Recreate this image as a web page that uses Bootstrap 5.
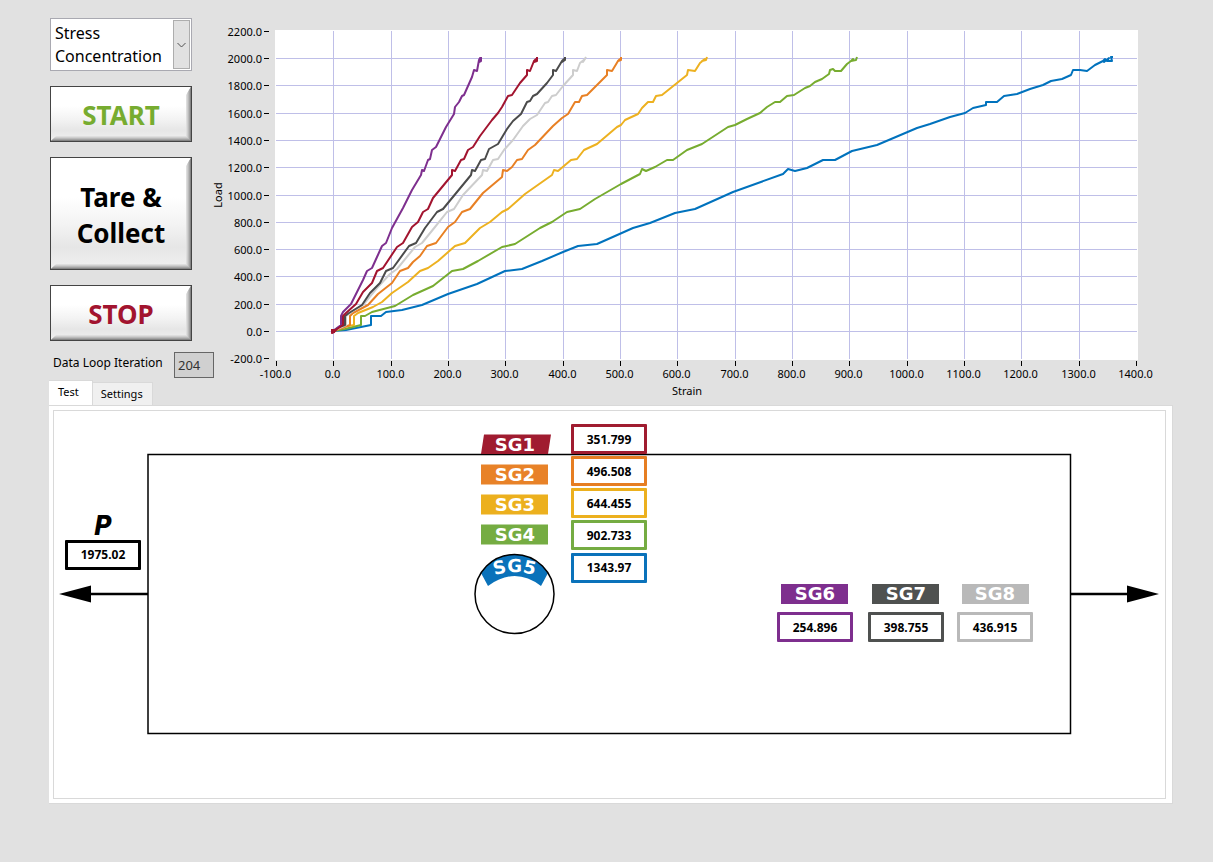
<!DOCTYPE html>
<html lang="en">
<head>
<meta charset="utf-8">
<meta name="viewport" content="width=device-width, initial-scale=1">
<title>Stress Concentration</title>
<link href="https://cdn.jsdelivr.net/npm/bootstrap@5.3.0/dist/css/bootstrap.min.css" rel="stylesheet">
<style>
  body { background: #e1e1e1; color: #000; font-family: "Noto Sans", "Open Sans", sans-serif; font-size: 12px; line-height: 16px; }
  .bench { padding: 18px 40px 58px 49px; }
  .controls { width: 165px; }
  .control-stack { width: 143px; padding-left: 1px; gap: 15px; }
  .mode-box { height: 53px; }
  .mode-box select { height: 53px; border: 1px solid #a9a9b1; background: #fff; color: #000; font-size: 16px; line-height: 23px; padding: 2px 20px 2px 4px; white-space: normal; appearance: none; border-radius: 0; }
  .mode-arrow { top: 2px; right: 2px; bottom: 2px; width: 17px; background: #e1e1e1; border: 1px solid #adadad; pointer-events: none; }
  .bevel { --bs-btn-border-radius: 0; position: relative; height: 56px; padding: 2px 0 0; border: 1px solid #444; color: #000; font-size: 26px; font-weight: 700; line-height: 36px; background: linear-gradient(#fff 0 35%, #f3f3f3 60%, #e6e6e6 80%, #f0f0f0 100%); }
  .bevel:hover { color: #000; border-color: #222; }
  .bevel::after { content: ""; position: absolute; inset: 0; pointer-events: none;
    box-shadow: inset -1px -1px #858585, inset -2px -2px #a3a3a3, inset -3px -3px #bababa, inset -4px -4px #cecece, inset -5px -5px #dedede;
    clip-path: polygon(100% 0, 100% 100%, 0 100%, 6px calc(100% - 6px), calc(100% - 6px) calc(100% - 6px), calc(100% - 5px) 8px); }
  .bevel-tall { height: 113px; }
  .go, .go:hover { color: #77ac30; }
  .halt, .halt:hover { color: #a2142f; }
  .loop-row { padding: 11px 0 0 4px; }
  .loop-row label { line-height: 22px; }
  .loop-row input { width: 40px; height: 26px; border: 1px solid #666; background: #d0d0d0; color: #333; padding: 0 3px; font-size: 13px; }
  .page-tabs { --bs-nav-tabs-border-width: 0; border: 0; }
  .page-tabs .nav-link { border: 1px solid #d9d9d9; border-width: 1px 1px 0 0; border-radius: 0; margin: 0; height: 23px; padding: 0 9px 0 8px; background: #f0f0f0; color: #000; font-size: 11px; }
  .page-tabs .nav-link.active { height: 25px; padding: 0 13px 2px 9px; background: #fff; color: #000; border-color: #d9d9d9; }
  .page-panel { background: #fff; border: 1px solid #d9d9d9; border-width: 1px 1px 1px 0; padding: 4px 6px 4px 4px; }
  .specimen { border: 1px solid #d9d9d9; }
  svg { overflow: visible; }
  svg text { font-size: 11px; }
  .grid-line { stroke: #bfbfe8; }
  .tick { stroke: #000; }
  .trace { fill: none; stroke-width: 2; stroke-linejoin: round; }
  svg text.gauge { font: 700 18px "DejaVu Sans", sans-serif; fill: #fff; text-anchor: middle; }
  svg text.load-sign { font: italic 700 27px "Liberation Sans Narrow", "DejaVu Sans Condensed", sans-serif; fill: #000; text-anchor: middle; }
  .reading { left: calc(var(--x) / 1111 * 100%); top: calc(var(--y) / 387 * 100%); width: 76px; height: 30px; border: 3px solid var(--ink); border-radius: 1px; background: #fff; color: #000; padding: 0; text-align: center; font-size: 12px; font-weight: 700; }
</style>
</head>
<body>
<main class="container-fluid bench">
  <div class="d-flex">
    <div class="controls d-flex flex-column flex-shrink-0">
      <div class="control-stack d-flex flex-column">
        <div class="mode-box position-relative">
          <select class="w-100" aria-label="Test type"><option>Stress Concentration</option></select>
          <span class="mode-arrow position-absolute d-flex align-items-center justify-content-center">
            <svg width="9" height="6" viewBox="0 0 9 6"><path d="M.5 1 4.500 5 8.500 1" fill="none" stroke="#505050"/></svg>
          </span>
        </div>
        <button type="button" class="btn bevel go">START</button>
        <button type="button" class="btn bevel bevel-tall">Tare &amp;<br>Collect</button>
        <button type="button" class="btn bevel halt">STOP</button>
      </div>
      <div class="loop-row d-flex justify-content-between">
        <label for="loop">Data Loop Iteration</label>
        <input id="loop" value="204" readonly>
      </div>
      <div class="nav nav-tabs page-tabs mt-auto align-items-end flex-nowrap" role="tablist">
        <button type="button" class="nav-link active" role="tab" aria-selected="true">Test</button>
        <button type="button" class="nav-link" role="tab" aria-selected="false">Settings</button>
      </div>
    </div>
    <div class="flex-grow-1">
      <svg id="chart" class="d-block w-100" viewBox="214 18 959 387" role="img" aria-label="Load against strain">
        <rect x="275" y="30" width="863" height="330" fill="#fff"/>
        <g id="axes"></g>
        <g id="traces"></g>
        <text x="687" y="395" text-anchor="middle">Strain</text>
        <text transform="translate(222 195) rotate(-90)" text-anchor="middle">Load</text>
      </svg>
    </div>
  </div>

  <section class="page-panel">
    <div class="specimen position-relative">
      <svg class="d-block w-100" viewBox="54 411 1111 387">
        <rect x="148" y="454.500" width="922.500" height="279" fill="none" stroke="#000" stroke-width="1.500"/>
        <g stroke="#000" stroke-width="2.500"><path d="M88 594H148M1070 594H1130"/></g>
        <path d="M59 594 91 585.500V602.500ZM1159 594 1127 585.500V602.500Z"/>
        <path d="M484 434.500H551L548 454H481Z" fill="#a01c30"/>
        <rect x="481" y="464.500" width="67" height="20" fill="#e88228"/>
        <rect x="481" y="494.500" width="67" height="20" fill="#ecb01e"/>
        <rect x="481" y="524.500" width="67" height="20" fill="#75ac42"/>
        <path d="M481 573A39.500 39.500 0 0 1 548 573L541 586Q515 566 488 586Z" fill="#0a72ba"/>
        <circle cx="514.500" cy="594" r="39.500" fill="none" stroke="#000" stroke-width="1.500"/>
        <rect x="781" y="584" width="67" height="20" fill="#7e2f8e"/>
        <rect x="872" y="584" width="67" height="20" fill="#4f5150"/>
        <rect x="962" y="584" width="67" height="20" fill="#b9b9b9"/>
        <path id="hole-arc" d="M480 583A60 60 0 0 1 549 583" fill="none"/>
        <text class="gauge" x="515" y="451">SG1</text>
        <text class="gauge" x="515" y="481">SG2</text>
        <text class="gauge" x="515" y="511">SG3</text>
        <text class="gauge" x="515" y="541">SG4</text>
        <text class="gauge"><textPath href="#hole-arc" startOffset="50%">SG5</textPath></text>
        <text class="gauge" x="815" y="600">SG6</text>
        <text class="gauge" x="906" y="600">SG7</text>
        <text class="gauge" x="995" y="600">SG8</text>
        <text class="load-sign" x="103" y="535">P</text>
      </svg>
      <div id="readings"></div>
    </div>
  </section>
</main>

<script src="https://cdn.jsdelivr.net/npm/bootstrap@5.3.0/dist/js/bootstrap.bundle.min.js"></script>
<script>
  const NS = 'http://www.w3.org/2000/svg';
  function add(parent, tag, attrs, text) {
    const el = document.createElementNS(NS, tag);
    for (const k in attrs) el.setAttribute(k, attrs[k]);
    if (text) el.textContent = text;
    parent.appendChild(el);
  }
  const axes = document.getElementById('axes');
  for (let load = -200; load <= 2200; load += 200) {
    const y = Math.floor(331.4 - load * 0.13636) + 0.5;
    if (load > -200 && load < 2200) add(axes, 'line', {class: 'grid-line', x1: 276, x2: 1137, y1: y, y2: y});
    add(axes, 'line', {class: 'tick', x1: 264, x2: 269, y1: y, y2: y});
    add(axes, 'text', {x: 262, y: y + 4, 'text-anchor': 'end'}, load.toFixed(1));
  }
  for (let strain = -100; strain <= 1400; strain += 100) {
    const x = Math.floor(333.7 + strain * 0.57333) + 0.5;
    if (strain > -100 && strain < 1400) add(axes, 'line', {class: 'grid-line', x1: x, x2: x, y1: 31, y2: 359});
    add(axes, 'line', {class: 'tick', x1: x, x2: x, y1: 361, y2: 366});
    add(axes, 'text', {x: x - 1, y: 378, 'text-anchor': 'middle'}, strain.toFixed(1));
  }
  const traces = [
    ['#0072bd', '333,331 346,330 371,325 371,316 381,316 386,312 402,310 422,305 448,294 477,284 505,271 522,269 542,261 563,252 578,246 597,244 633,228 650,223 675,213 695,209 733,192 783,174 788,169 795,171 807,168 823,160 835,160 852,151 877,145 917,128 930,124 950,117 965,113 973,108 986,105 986,102 997,102 1004,96 1017,94 1030,89 1043,85 1051,81 1062,79 1071,75 1073,70 1080,70 1087,71 1095,65 1103,61 1105,59 1104,62 1109,58 1107,61 1112,61 1111,57 1113,57'],
    ['#77ac30', '333,331 345,329 361,325 361,316 365,316 372,312 395,306 413,295 433,286 452,271 463,269 478,261 502,247 515,244 540,228 552,222 567,212 580,209 595,199 621,184 640,174 642,169 646,171 655,167 667,160 673,160 687,150 702,144 728,127 735,125 747,119 760,113 767,107 775,102 780,102 787,96 794,95 805,88 810,86 815,82 822,79 829,74 830,70 833,69 835,71 841,71 847,64 851,61 853,59 851,61 856,60 857,57'],
    ['#edb120', '333,331 343,327 354,325 354,316 358,313 373,307 382,302 392,293 408,282 420,271 428,268 438,261 455,246 465,243 480,228 490,222 502,212 508,209 525,194 552,175 554,170 558,171 571,160 577,159 584,150 597,144 617,127 621,125 625,120 638,114 642,108 648,102 653,102 656,96 662,95 677,83 687,75 688,70 695,71 700,63 705,59 702,61 706,60 707,57'],
    ['#e88024', '333,331 342,328 350,325 350,316 353,313 368,305 378,294 392,283 400,271 408,268 413,262 420,256 427,246 436,243 448,227 455,222 462,212 470,209 483,193 502,177 503,170 507,171 512,167 517,160 522,159 528,150 535,145 553,126 562,118 568,114 575,102 579,102 582,96 587,95 607,75 607,70 612,71 618,61 620,59 618,61 621,60 621,57'],
    ['#cdcdcd', '333,331 346,325 346,316 353,311 363,305 377,288 390,274 397,269 415,247 422,243 435,227 447,212 454,209 463,195 482,175 483,170 487,171 493,160 498,159 504,150 513,140 523,126 530,119 537,115 545,103 548,102 552,96 556,95 563,86 573,75 573,70 577,71 580,63 585,59 583,62 586,57'],
    ['#4b4b4b', '333,331 339,327 345,325 345,316 349,313 362,305 370,293 380,283 386,271 393,268 409,246 416,243 425,228 437,212 443,209 457,192 471,175 472,170 475,171 481,160 485,159 489,149 498,144 507,129 513,121 521,114 527,102 530,101 533,96 537,94 547,83 553,75 553,70 556,71 562,61 564,59 562,62 565,60 565,57'],
    ['#7e2f8e', '333,331 341,325 341,316 343,312 351,304 357,292 363,280 367,271 372,268 377,257 382,246 386,243 392,228 403,208 412,190 421,175 422,170 424,171 428,160 430,159 432,150 436,147 446,127 454,114 455,107 459,102 462,96 464,95 472,77 474,70 477,71 479,60 480,58 479,62 481,61 481,57'],
    ['#a2142f', '333,331 332,333 334,332 337,329 343,325 343,316 346,313 356,304 363,292 372,283 377,271 383,268 397,247 403,243 412,227 418,222 423,212 428,209 433,198 452,175 452,170 455,171 461,160 464,159 468,150 473,147 480,136 492,120 498,113 502,107 508,96 512,95 520,83 527,75 527,70 530,71 534,61 536,59 534,62 537,61 537,57']
  ];
  const plot = document.getElementById('traces');
  traces.forEach(([stroke, points]) => add(plot, 'polyline', {class: 'trace', stroke, points}));
  add(plot, 'rect', {x: 331, y: 329, width: 4, height: 4, fill: '#a2142f'});

  const readings = [
    ['P', '1975.02', 11, 129, '#000'],
    ['SG1', '351.799', 517, 13, '#a01c30'], ['SG2', '496.508', 517, 45, '#e67e22'],
    ['SG3', '644.455', 517, 77, '#ecb01e'], ['SG4', '902.733', 517, 109, '#75ac42'],
    ['SG5', '1343.97', 517, 142, '#0a72ba'], ['SG6', '254.896', 723, 201, '#7e2f8e'],
    ['SG7', '398.755', 814, 201, '#4f5150'], ['SG8', '436.915', 903, 201, '#b9b9b9']
  ];
  const holder = document.getElementById('readings');
  readings.forEach(([name, value, x, y, ink]) => {
    const box = document.createElement('input');
    box.className = 'reading position-absolute';
    box.readOnly = true;
    box.setAttribute('aria-label', name);
    box.setAttribute('value', value);
    box.style.cssText = `--x:${x};--y:${y};--ink:${ink}`;
    holder.appendChild(box);
  });
</script>
</body>
</html>
